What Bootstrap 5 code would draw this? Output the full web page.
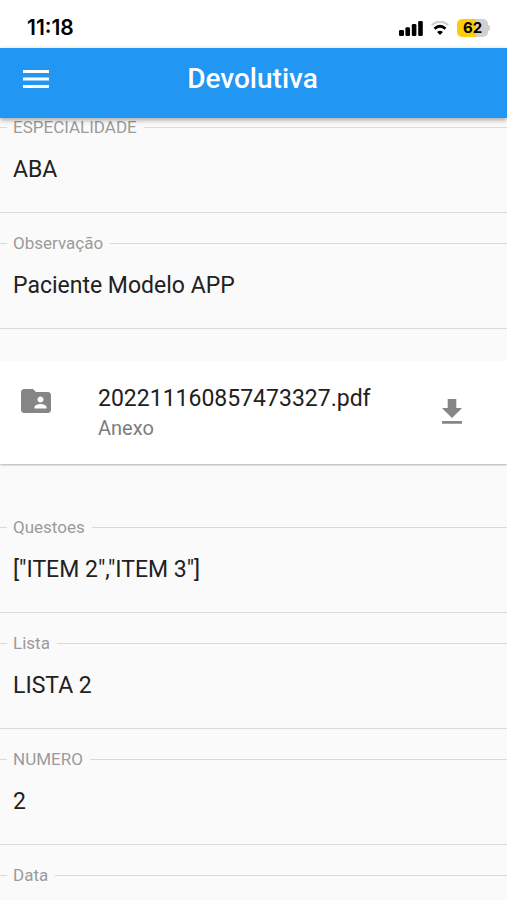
<!DOCTYPE html>
<html lang="pt-BR">
<head>
<meta charset="utf-8">
<meta name="viewport" content="width=device-width, initial-scale=1">
<title>Devolutiva</title>
<link href="https://cdn.jsdelivr.net/npm/bootstrap@5.3.0/dist/css/bootstrap.min.css" rel="stylesheet">
<style>
  body { font-family: Roboto, sans-serif; background: #fafafa; color: #212121; }
  .status-bar { height: 48px; padding: 8px 17px 0 27px; font-family: Inter, sans-serif; color: #000; }
  .clock { font-size: 21px; line-height: 24px; font-weight: 600; }
  .battery { width: 31px; height: 18px; border-radius: 5px; font-size: 15px; line-height: 18px; font-weight: 700; background: linear-gradient(to right, #fecb0e 62%, #d0d0d0 62%); }
  .battery-tip { width: 2px; height: 6px; border-radius: 0 2px 2px 0; background: #d0d0d0; }
  .app-bar { height: 70px; background: #2196f3; box-shadow: 0 2px 5px rgba(0, 0, 0, .35); }
  .app-title { font-size: 28px; line-height: 32px; font-weight: 500; }
  .bar-row { padding: 0 2px 8px 0; }
  .menu-btn { width: 71px; }
  .field { margin-bottom: 21px; border-bottom: 1px solid #dadada; }
  .field-label { height: 18px; font-size: 17px; line-height: 18px; color: #9b9b9b; }
  .field-label::before, .field-label::after { content: ""; height: 1px; background: #d9d9d9; }
  .field-label::before { width: 7px; margin-right: 6px; }
  .field-label::after { flex: 1; margin-left: 7px; }
  .field-value { font-size: 23px; line-height: 30px; padding: 18px 13px 28px; color: #212121; height: 76px; }
  .attachment { margin: 32px 0 54px; padding: 22px 32px 22px 18px; background: #fff; box-shadow: 0 1px 2px rgba(0, 0, 0, .3); clip-path: inset(0 0 -4px 0); }
  .folder-icon { margin-right: 44px; }
  .file-name { font-size: 23px; line-height: 32px; }
  .file-kind { font-size: 20px; line-height: 27px; color: #7d7d7d; }
</style>
</head>
<body class="vh-100 d-flex flex-column overflow-hidden">
<header class="position-relative z-1 flex-shrink-0">
  <div class="status-bar d-flex align-items-center justify-content-between bg-white">
    <span class="clock">11:18</span>
    <div class="d-flex align-items-center">
      <svg class="me-2" width="24" height="16" viewBox="0 0 24 16" aria-hidden="true"><rect y="10" width="5" height="6" rx="1.3"/><rect x="6.4" y="7.3" width="4.6" height="8.7" rx="1.3"/><rect x="12.8" y="4" width="4.6" height="12" rx="1.3"/><rect x="19.2" y="1" width="4.6" height="15" rx="1.3"/></svg>
      <svg class="me-2" width="18" height="14" viewBox="0 0 18 14" aria-hidden="true"><path d="M.8 4.2Q9-2.8 17.2 4.2" fill="none" stroke="#cfcfcf" stroke-width="2.2"/><path d="M3.5 7.7Q9 2.8 14.5 7.7" fill="none" stroke="#000" stroke-width="2.8"/><path d="M9 14 6 10.9Q9 8.500 12 10.9Z"/></svg>
      <span class="battery text-center">62</span><span class="battery-tip"></span>
    </div>
  </div>
  <nav class="app-bar bar-row d-flex align-items-center text-white" aria-label="Principal">
    <button type="button" class="menu-btn btn border-0 rounded-0 p-0 d-flex justify-content-center" aria-label="Menu">
      <svg width="26" height="18" viewBox="0 0 26 18" fill="#fff" aria-hidden="true"><path d="M0 0h26v3H0zM0 7.500h26v3H0zM0 15h26v3H0z"/></svg>
    </button>
    <h1 class="app-title flex-fill text-center mb-0">Devolutiva</h1>
    <span class="menu-btn"></span>
  </nav>
</header>
<main class="flex-fill overflow-hidden">
  <form>
    <div class="field">
      <label class="field-label d-flex align-items-center" for="especialidade">ESPECIALIDADE</label>
      <input class="field-value form-control border-0 rounded-0 bg-transparent" id="especialidade" value="ABA" readonly>
    </div>
    <div class="field">
      <label class="field-label d-flex align-items-center" for="observacao">Observação</label>
      <input class="field-value form-control border-0 rounded-0 bg-transparent" id="observacao" value="Paciente Modelo APP" readonly>
    </div>
    <section class="attachment d-flex align-items-center">
      <svg class="folder-icon align-self-start flex-shrink-0" width="36" height="36" viewBox="0 0 24 24" fill="#868686" aria-hidden="true"><path d="M20 6h-8l-2-2H4c-1.100 0-1.990.9-1.990 2L2 18c0 1.100.9 2 2 2h16c1.100 0 2-.9 2-2V8c0-1.100-.9-2-2-2zm-5 3c1.100 0 2 .9 2 2s-.9 2-2 2-2-.9-2-2 .9-2 2-2zm4 8h-8v-1c0-1.330 2.670-2 4-2s4 .67 4 2v1z"/></svg>
      <div class="flex-fill">
        <div class="file-name">202211160857473327.pdf</div>
        <div class="file-kind">Anexo</div>
      </div>
      <button type="button" class="btn border-0 p-0" aria-label="Baixar anexo">
        <svg width="46" height="36" viewBox="0 0 46 36" fill="#868686" aria-hidden="true"><path d="M18.700 4h8.600v9h5.700l-10 10-10-10h5.700zM13 26h20v2.800H13z"/></svg>
      </button>
    </section>
    <div class="field">
      <label class="field-label d-flex align-items-center" for="questoes">Questoes</label>
      <input class="field-value form-control border-0 rounded-0 bg-transparent" id="questoes" value='["ITEM 2","ITEM 3"]' readonly>
    </div>
    <div class="field">
      <label class="field-label d-flex align-items-center" for="lista">Lista</label>
      <input class="field-value form-control border-0 rounded-0 bg-transparent" id="lista" value="LISTA 2" readonly>
    </div>
    <div class="field">
      <label class="field-label d-flex align-items-center" for="numero">NUMERO</label>
      <input class="field-value form-control border-0 rounded-0 bg-transparent" id="numero" value="2" readonly>
    </div>
    <div class="field">
      <label class="field-label d-flex align-items-center" for="data">Data</label>
      <input class="field-value form-control border-0 rounded-0 bg-transparent" id="data" readonly>
    </div>
  </form>
</main>
<script src="https://cdn.jsdelivr.net/npm/bootstrap@5.3.0/dist/js/bootstrap.bundle.min.js"></script>
</body>
</html>
